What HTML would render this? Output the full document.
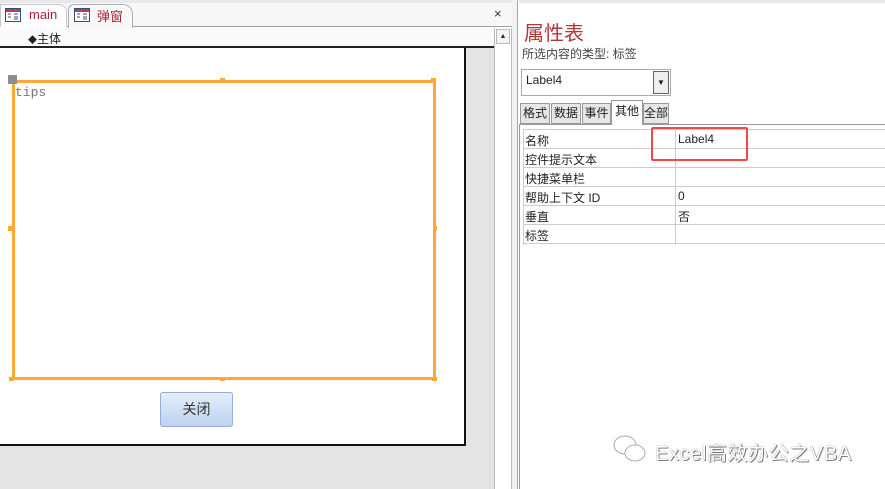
<!DOCTYPE html>
<html><head><meta charset="utf-8"><style>
*{margin:0;padding:0;box-sizing:border-box}
body{width:885px;height:489px;overflow:hidden;background:#fff;font-family:"Liberation Sans","Noto Sans CJK SC",sans-serif;font-size:12px;color:#222;position:relative}
.a{position:absolute}
</style></head><body>
<div class="a" style="left:0;top:0;width:512px;height:3px;background:#e8e8e8"></div>
<div class="a" style="left:0;top:3px;width:512px;height:24px;background:#f7f7f7;border-bottom:1px solid #a0a0a0"></div>
<div class="a" style="left:0;top:4px;width:67px;height:23px;border:1px solid #c8c8c8;border-bottom:none;border-radius:0 8px 0 0;background:#fff"></div>
<div class="a" style="left:68px;top:4px;width:65px;height:24px;border:1px solid #b0b0b0;border-bottom:none;border-radius:6px 10px 0 0;background:#f8f8f8"></div>
<svg class="a" style="left:5px;top:8px" width="16" height="14"><rect x="0.5" y="0.5" width="15" height="13" fill="#fff" stroke="#34507a"/><rect x="1" y="1" width="14" height="3" fill="#b04060"/><path d="M3 6h3M3 9h3M9 6h4M9 9h4M9 11h4" stroke="#34507a"/></svg>
<div class="a" style="left:29px;top:7px;color:#b0203a;font-size:13px">main</div>
<svg class="a" style="left:74px;top:8px" width="16" height="14"><rect x="0.5" y="0.5" width="15" height="13" fill="#fff" stroke="#34507a"/><rect x="1" y="1" width="14" height="3" fill="#b04060"/><path d="M3 6h3M3 9h3M9 6h4M9 9h4M9 11h4" stroke="#34507a"/></svg>
<div class="a" style="left:97px;top:6px;color:#b0203a;font-size:13px">弹窗</div>
<div class="a" style="left:494px;top:6px;font-size:13px;color:#333">×</div>
<div class="a" style="left:0;top:28px;width:494px;height:20px;background:#fafafa;border-bottom:2px solid #222"></div>
<div class="a" style="left:28px;top:30px;font-size:12px"><span style="font-size:9px">◆</span>主体</div>
<div class="a" style="left:494px;top:28px;width:18px;height:461px;background:#fff;border-left:1px solid #bbb;border-right:1px solid #bbb"></div>
<div class="a" style="left:496px;top:29px;width:14px;height:15px;border:1px solid #bbb;background:#f4f4f4;font-size:7px;text-align:center;line-height:13px">▲</div>
<div class="a" style="left:0;top:48px;width:494px;height:441px;background:#e4e4e4"></div>
<div class="a" style="left:0;top:48px;width:466px;height:398px;background:#fff;border-right:2px solid #111;border-bottom:2px solid #111"></div>
<div class="a" style="left:12px;top:80px;width:424px;height:300px;border:3px solid #ffa836"></div>
<div class="a" style="left:8px;top:75px;width:9px;height:9px;background:#8a8e96"></div>
<div class="a" style="left:220px;top:78px;width:5px;height:4px;background:#ffa836"></div>
<div class="a" style="left:431px;top:78px;width:5px;height:5px;background:#ffa836"></div>
<div class="a" style="left:8px;top:226px;width:4px;height:5px;background:#ffa836"></div>
<div class="a" style="left:433px;top:226px;width:4px;height:5px;background:#ffa836"></div>
<div class="a" style="left:9px;top:377px;width:5px;height:4px;background:#ffa836"></div>
<div class="a" style="left:220px;top:377px;width:5px;height:4px;background:#ffa836"></div>
<div class="a" style="left:432px;top:377px;width:5px;height:4px;background:#ffa836"></div>
<div class="a" style="left:15px;top:85px;font-family:'Liberation Mono',monospace;font-size:13px;color:#777">tips</div>
<div class="a" style="left:160px;top:392px;width:73px;height:35px;border:1px solid #90b0d8;border-radius:3px;background:linear-gradient(#e6eefa,#bcd2f0);text-align:center;line-height:33px;font-size:14px;color:#333">关闭</div>
<div class="a" style="left:512px;top:0;width:6px;height:489px;background:#f2f2f2;border-right:1px solid #aaa"></div>
<div class="a" style="left:519px;top:0;width:366px;height:3px;background:#e8e8e8"></div>
<div class="a" style="left:524px;top:17px;font-size:20px;color:#b03838">属性表</div>
<div class="a" style="left:522px;top:45px;font-size:12px;color:#444">所选内容的类型: 标签</div>
<div class="a" style="left:521px;top:69px;width:150px;height:27px;border:1px solid #aaa;background:#fff"></div>
<div class="a" style="left:526px;top:73px;font-size:12px">Label4</div>
<div class="a" style="left:653px;top:71px;width:16px;height:23px;border:1px solid #666;background:#eee;font-size:8px;text-align:center;line-height:22px">▼</div>
<div class="a" style="left:520px;top:103px;width:30px;height:21px;border:1px solid #999;background:#e6e6e6;text-align:center;line-height:19px">格式</div>
<div class="a" style="left:551px;top:103px;width:30px;height:21px;border:1px solid #999;background:#e6e6e6;text-align:center;line-height:19px">数据</div>
<div class="a" style="left:582px;top:103px;width:29px;height:21px;border:1px solid #999;background:#e6e6e6;text-align:center;line-height:19px">事件</div>
<div class="a" style="left:611px;top:100px;width:32px;height:25px;border:1px solid #999;border-bottom:none;background:#fff;text-align:center;line-height:21px;z-index:2">其他</div>
<div class="a" style="left:643px;top:103px;width:26px;height:21px;border:1px solid #999;background:#e6e6e6;text-align:center;line-height:19px;overflow:hidden">全部</div>
<div class="a" style="left:519px;top:124px;width:366px;height:365px;border-top:1px solid #999;border-left:1px solid #999"></div>
<div class="a" style="left:523px;top:129px;width:362px;border-top:1px solid #ccc"></div>
<div class="a" style="left:523px;top:129px;height:116px;border-left:1px solid #ccc"></div>
<div class="a" style="left:675px;top:129px;height:116px;border-left:1px solid #ccc"></div>
<div class="a" style="left:523px;top:130px;width:362px">
<div style="height:19px;border-bottom:1px solid #ccc;position:relative"><span style="position:absolute;left:2px;top:2px">名称</span><span style="position:absolute;left:155px;top:2px">Label4</span></div>
<div style="height:19px;border-bottom:1px solid #ccc;position:relative"><span style="position:absolute;left:2px;top:2px">控件提示文本</span></div>
<div style="height:19px;border-bottom:1px solid #ccc;position:relative"><span style="position:absolute;left:2px;top:2px">快捷菜单栏</span></div>
<div style="height:19px;border-bottom:1px solid #ccc;position:relative"><span style="position:absolute;left:2px;top:2px">帮助上下文 ID</span><span style="position:absolute;left:155px;top:2px">0</span></div>
<div style="height:19px;border-bottom:1px solid #ccc;position:relative"><span style="position:absolute;left:2px;top:2px">垂直</span><span style="position:absolute;left:155px;top:2px">否</span></div>
<div style="height:19px;border-bottom:1px solid #ccc;position:relative"><span style="position:absolute;left:2px;top:2px">标签</span></div>
</div>
<div class="a" style="left:651px;top:127px;width:97px;height:34px;border:2px solid #f04848;border-radius:2px"></div>
<svg class="a" style="left:612px;top:433px" width="36" height="32"><ellipse cx="13" cy="12" rx="11" ry="9" fill="none" stroke="#aaa"/><ellipse cx="23" cy="20" rx="10" ry="8" fill="#fff" stroke="#aaa"/></svg>
<div class="a" style="left:655px;top:437px;font-size:20px;letter-spacing:0.6px;color:#fff;text-shadow:0 0 1px #555,1px 1px 0 #888">Excel高效办公之VBA</div>
</body></html>
